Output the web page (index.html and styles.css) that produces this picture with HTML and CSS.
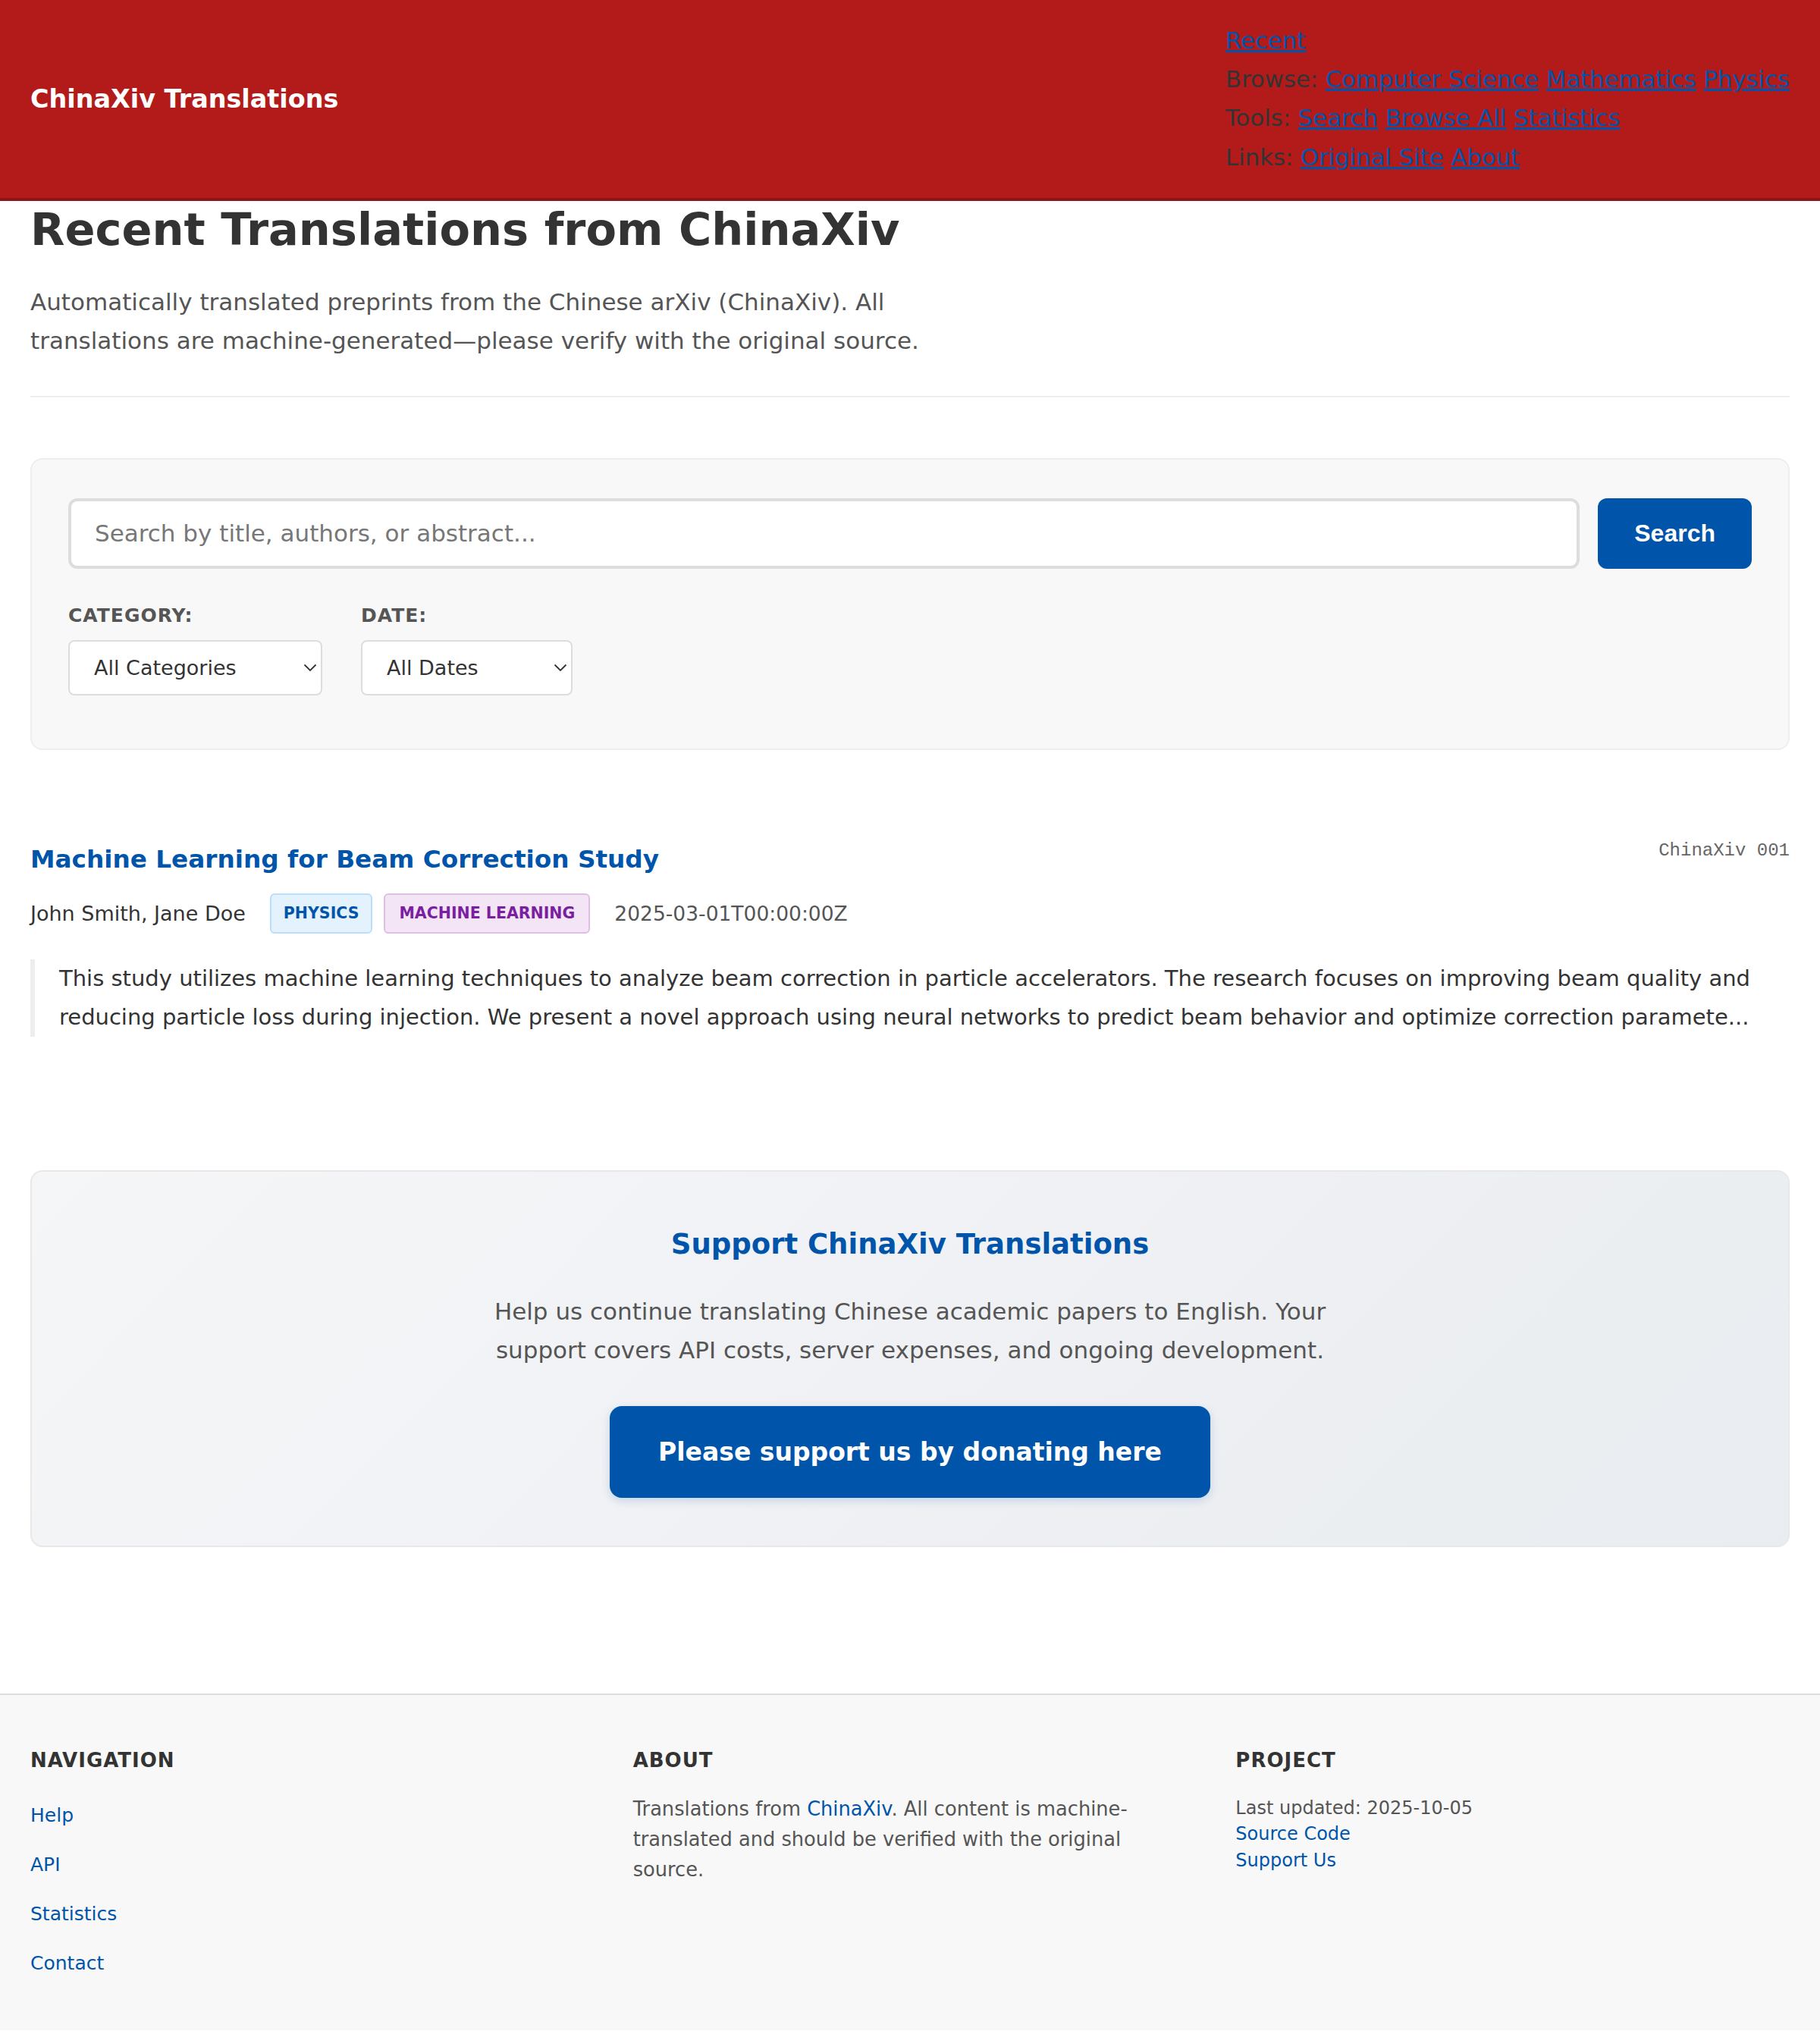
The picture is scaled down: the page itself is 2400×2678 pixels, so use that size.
FILE: index.html
```html
<!DOCTYPE html>
<html lang="en">
<head>
<meta charset="utf-8">
<title>ChinaXiv Translations</title>
<link rel="stylesheet" href="styles.css">
</head>
<body>
<header class="site-header">
  <div class="brand">ChinaXiv Translations</div>
  <nav class="site-nav">
    <div class="nav-line"><a href="#">Recent</a></div>
    <div class="nav-line">Browse: <a href="#">Computer Science</a> <a href="#">Mathematics</a> <a href="#">Physics</a></div>
    <div class="nav-line">Tools: <a href="#">Search</a> <a href="#">Browse All</a> <a href="#">Statistics</a></div>
    <div class="nav-line">Links: <a href="#">Original Site</a> <a href="#">About</a></div>
  </nav>
</header>

<main class="container">
  <h1 class="page-title">Recent Translations from ChinaXiv</h1>
  <p class="intro">Automatically translated preprints from the Chinese arXiv (ChinaXiv). All translations are machine-generated—please verify with the original source.</p>
  <hr class="divider">

  <section class="search-panel">
    <form class="search-row">
      <input class="search-input" type="text" placeholder="Search by title, authors, or abstract...">
      <button class="search-btn" type="button">Search</button>
    </form>
    <div class="filters">
      <div class="filter">
        <label class="filter-label">Category:</label>
        <div class="select-wrap">
          <select class="filter-select select-category">
            <option>All Categories</option>
            <option>Computer Science</option>
            <option>Mathematics</option>
            <option>Physics</option>
          </select>
          <svg class="chev" width="18" height="11" viewBox="0 0 18 11"><path d="M1.5 1.5 L9 9 L16.5 1.5" fill="none" stroke="#333" stroke-width="1.8"/></svg>
        </div>
      </div>
      <div class="filter">
        <label class="filter-label">Date:</label>
        <div class="select-wrap">
          <select class="filter-select select-date">
            <option>All Dates</option>
            <option>Last week</option>
            <option>Last month</option>
          </select>
          <svg class="chev" width="18" height="11" viewBox="0 0 18 11"><path d="M1.5 1.5 L9 9 L16.5 1.5" fill="none" stroke="#333" stroke-width="1.8"/></svg>
        </div>
      </div>
    </div>
  </section>

  <article class="paper">
    <div class="paper-head">
      <h2 class="paper-title"><a href="#">Machine Learning for Beam Correction Study</a></h2>
      <span class="paper-id">ChinaXiv 001</span>
    </div>
    <div class="paper-meta">
      <span class="authors">John Smith, Jane Doe</span>
      <span class="tags">
        <span class="tag tag-physics">Physics</span>
        <span class="tag tag-ml">Machine Learning</span>
      </span>
      <span class="date">2025-03-01T00:00:00Z</span>
    </div>
    <blockquote class="abstract">This study utilizes machine learning techniques to analyze beam correction in particle accelerators. The research focuses on improving beam quality and reducing particle loss during injection. We present a novel approach using neural networks to predict beam behavior and optimize correction paramete...</blockquote>
  </article>

  <section class="support">
    <h2 class="support-title">Support ChinaXiv Translations</h2>
    <p class="support-text">Help us continue translating Chinese academic papers to English. Your support covers API costs, server expenses, and ongoing development.</p>
    <a class="donate-btn" href="#">Please support us by donating here</a>
  </section>
</main>

<footer class="site-footer">
  <div class="footer-grid">
    <div class="footer-col">
      <h3 class="footer-heading">Navigation</h3>
      <ul class="footer-links">
        <li><a href="#">Help</a></li>
        <li><a href="#">API</a></li>
        <li><a href="#">Statistics</a></li>
        <li><a href="#">Contact</a></li>
      </ul>
    </div>
    <div class="footer-col">
      <h3 class="footer-heading">About</h3>
      <p class="footer-about">Translations from <a href="#">ChinaXiv</a>. All content is machine-translated and should be verified with the original source.</p>
    </div>
    <div class="footer-col">
      <h3 class="footer-heading">Project</h3>
      <p class="footer-project">Last updated: 2025-10-05<br><a href="#">Source Code</a><br><a href="#">Support Us</a></p>
    </div>
  </div>
</footer>
</body>
</html>
```

FILE: styles.css
```css
html, body {
  margin: 0;
  padding: 0;
}
body {
  font-family: "DejaVu Sans", sans-serif;
  color: #333;
  background: #fff;
}

/* Header */
.site-header {
  background: #b31b1b;
  border-bottom: 4px solid #8c1515;
  padding: 28px 40px;
  display: flex;
  justify-content: space-between;
  align-items: center;
}
.brand {
  color: #fff;
  font-weight: bold;
  font-size: 33.4px;
}
.site-nav {
  font-size: 30.7px;
  line-height: 51.2px;
  color: #333;
}
.site-nav a {
  color: #0055aa;
}

/* Main */
.container {
  padding: 0 40px;
}
.page-title {
  margin: 0;
  font-size: 59px;
  line-height: 76px;
  color: #333;
}
.intro {
  margin: 32px 0 0;
  max-width: 1220px;
  font-size: 31px;
  line-height: 51px;
  color: #555;
}
.divider {
  border: 0;
  border-top: 2px solid #eee;
  margin: 47px 0 0;
}

/* Search panel */
.search-panel {
  margin-top: 80px;
  background: #f8f8f8;
  border: 2px solid #eee;
  border-radius: 16px;
  padding: 51px 48px 48px;
}
.search-row {
  display: flex;
  gap: 24px;
  margin: 0;
}
.search-input {
  flex: 1;
  height: 93px;
  box-sizing: border-box;
  border: 4px solid #ddd;
  border-radius: 12px;
  padding: 0 31px;
  font-family: "DejaVu Sans", sans-serif;
  font-size: 31px;
  color: #333;
  background: #fff;
  outline: none;
}
.search-input::placeholder {
  color: #777;
}
.search-btn {
  height: 93px;
  padding: 0 48px;
  border: 0;
  border-radius: 12px;
  background: #0055aa;
  color: #fff;
  font-family: "Liberation Sans", Arial, sans-serif;
  font-weight: bold;
  font-size: 32px;
}
.filters {
  display: flex;
  gap: 51px;
  margin-top: 45px;
  margin-bottom: 22px;
}
.filter-label {
  display: block;
  font-size: 25px;
  line-height: 34px;
  font-weight: bold;
  text-transform: uppercase;
  color: #555;
  letter-spacing: 1px;
  margin-bottom: 15px;
}
.select-wrap {
  position: relative;
}
.filter-select {
  appearance: none;
  -webkit-appearance: none;
  height: 73px;
  box-sizing: border-box;
  border: 2px solid #ddd;
  border-radius: 8px;
  background: #fff;
  padding: 0 32px;
  font-family: "DejaVu Sans", sans-serif;
  font-size: 27px;
  color: #333;
}
.select-category { width: 335px; }
.select-date { width: 279px; }
.chev {
  position: absolute;
  right: 7px;
  top: 31px;
  pointer-events: none;
}

/* Paper */
.paper {
  margin-top: 119px;
}
.paper-head {
  display: flex;
  justify-content: space-between;
  align-items: flex-start;
}
.paper-title {
  margin: 0;
  font-size: 32.7px;
  line-height: 50px;
}
.paper-title a {
  color: #0055aa;
  text-decoration: none;
}
.paper-id {
  font-family: "Liberation Mono", "Courier New", monospace;
  font-size: 24px;
  line-height: 28px;
  color: #666;
}
.paper-meta {
  display: flex;
  align-items: center;
  gap: 32px;
  margin-top: 20px;
}
.authors {
  font-size: 27px;
  color: #333;
}
.tags {
  display: flex;
  gap: 15px;
}
.tag {
  display: inline-block;
  font-size: 20.5px;
  line-height: 33px;
  padding: 8px 16px;
  border: 2px solid;
  border-radius: 6px;
  font-weight: bold;
  text-transform: uppercase;
}
.tag-physics {
  background: #e3f2fd;
  border-color: #bbdefb;
  color: #0055aa;
}
.tag-ml {
  background: #f3e5f5;
  border-color: #e1bee7;
  color: #7b1fa2;
  padding: 8px 18px;
}
.date {
  font-size: 26.5px;
  color: #555;
}
.abstract {
  margin: 34px 0 0;
  border-left: 6px solid #eee;
  padding-left: 32px;
  font-size: 29px;
  line-height: 51px;
  color: #333;
}

/* Support */
.support {
  margin-top: 176px;
  border: 2px solid #e8e8e8;
  border-radius: 16px;
  background: linear-gradient(135deg, #f5f6f8 0%, #e9ecf0 100%);
  padding: 70px 48px 63px;
  text-align: center;
}
.support-title {
  margin: 0;
  font-size: 37px;
  line-height: 52px;
  color: #0055aa;
}
.support-text {
  max-width: 1200px;
  margin: 37px auto 48px;
  font-size: 31px;
  line-height: 51px;
  color: #555;
}
.donate-btn {
  display: inline-block;
  background: #0055aa;
  color: #fff;
  text-decoration: none;
  font-weight: bold;
  font-size: 33px;
  line-height: 57px;
  padding: 32px 64px;
  border-radius: 16px;
  box-shadow: 0 4px 12px rgba(0, 85, 170, 0.18);
}

/* Footer */
.site-footer {
  margin-top: 193px;
  background: #f8f8f8;
  border-top: 2px solid #ddd;
  padding: 66px 40px 66px;
}
.footer-grid {
  display: grid;
  grid-template-columns: repeat(3, 1fr);
  gap: 64px;
}
.footer-heading {
  margin: 0 0 24px;
  font-size: 26px;
  line-height: 40px;
  text-transform: uppercase;
  letter-spacing: 1px;
  color: #333;
}
.footer-links {
  list-style: none;
  margin: 0;
  padding: 6px 0 0;
}
.footer-links li {
  font-size: 25px;
  line-height: 45px;
  margin-bottom: 20px;
}
.footer-links li:last-child {
  margin-bottom: 0;
}
.site-footer a {
  color: #0055aa;
  text-decoration: none;
}
.footer-about {
  margin: 0;
  font-size: 25.7px;
  line-height: 40px;
  color: #555;
}
.footer-project {
  margin: 0;
  font-size: 24px;
  line-height: 34.5px;
  color: #555;
  padding-top: 2px;
}
```
